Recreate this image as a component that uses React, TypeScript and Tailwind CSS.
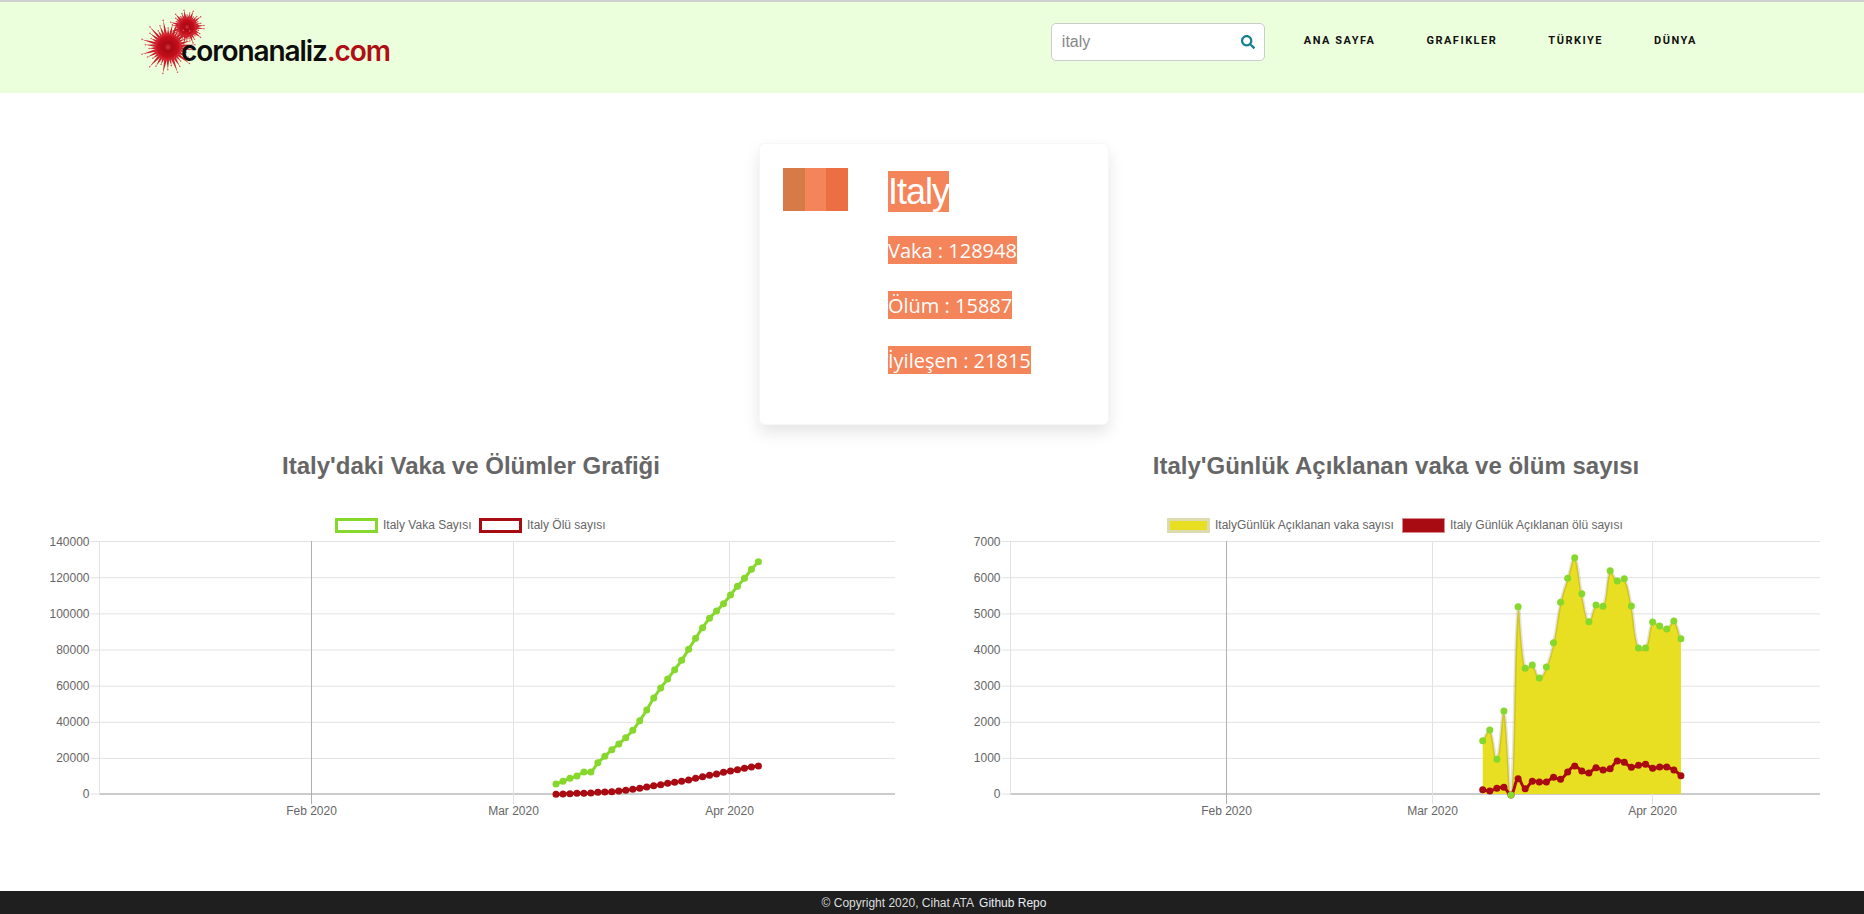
import { FaSearch } from "react-icons/fa";

type Point = [number, number];

const GRID_Y = [541.5, 577.7, 613.9, 650, 686.2, 722.3, 758.4, 794];
const TICKS = ["140000", "120000", "100000", "80000", "60000", "40000", "20000", "0"];
const DAILY_TICKS = ["7000", "6000", "5000", "4000", "3000", "2000", "1000", "0"];

// y values read off the chart, x is a fixed step per day
const totalCases = [822, 814, 805, 798, 786, 786, 758, 739, 719, 702, 683, 661, 632, 600, 564, 534, 507, 479, 451, 418, 385, 353, 325, 303, 281, 255, 229, 205, 178, 155];
const totalDeaths = [853, 852, 851, 850, 850, 849, 847, 846, 845, 843, 841, 838, 835, 831, 827, 824, 820, 817, 814, 810, 805, 800, 796, 792, 787, 783, 779, 775, 771, 768];
const dailyCases = [602, 570, 658, 513, 765, 200, 385, 375, 414, 381, 308, 187, 115, 53, 161, 245, 195, 199, 92, 123, 116, 198, 324, 324, 246, 258, 267, 243, 296];
const dailyDeaths = [749, 753, 745, 742, 765, 716, 746, 724, 726, 726, 712, 718, 696, 678, 693, 699, 683, 690, 686, 663, 667, 682, 676, 673, 685, 681, 681, 690, 707];

const toLeft = (values: number[]): Point[] =>
  values.map((v, i) => [556 + i * 6.98, 510 + v / 3]);
const toRight = (values: number[]): Point[] =>
  values.map((v, i) => [1482.7 + i * 7.08, 540 + v / 3]);

// same spline as chart.js, tension 0.4
const curve = (pts: Point[]) => {
  const ctrl = pts.map((p, i) => {
    const prev = pts[i - 1] ?? p;
    const next = pts[i + 1] ?? p;
    const d01 = Math.hypot(p[0] - prev[0], p[1] - prev[1]);
    const d12 = Math.hypot(next[0] - p[0], next[1] - p[1]);
    const sum = d01 + d12 || 1;
    const fa = (0.4 * d01) / sum;
    const fb = (0.4 * d12) / sum;
    return {
      before: [p[0] - fa * (next[0] - prev[0]), p[1] - fa * (next[1] - prev[1])],
      after: [p[0] + fb * (next[0] - prev[0]), p[1] + fb * (next[1] - prev[1])],
    };
  });
  let d = `M${pts[0][0]} ${pts[0][1]}`;
  for (let i = 1; i < pts.length; i++) {
    const a = ctrl[i - 1].after;
    const b = ctrl[i].before;
    d += ` C${a[0]} ${a[1]} ${b[0]} ${b[1]} ${pts[i][0]} ${pts[i][1]}`;
  }
  return d;
};

const Dots = ({ pts, color }: { pts: Point[]; color: string }) => (
  <>
    {pts.map((p, i) => (
      <circle key={i} cx={p[0]} cy={p[1]} r="3.5" fill={color} />
    ))}
  </>
);

const Axes = ({
  left,
  right,
  feb,
  mar,
  apr,
  ticks,
}: {
  left: number;
  right: number;
  feb: number;
  mar: number;
  apr: number;
  ticks: string[];
}) => (
  <>
    {GRID_Y.map((y) => (
      <line key={y} x1={left - 9} x2={right} y1={y} y2={y} stroke="#e2e2e2" />
    ))}
    <line x1={left} x2={right} y1={794} y2={794} stroke="#a6a6a6" />
    {ticks.map((t, i) => (
      <text
        key={t}
        x={left - 10}
        y={GRID_Y[i] + 4}
        textAnchor="end"
        fontSize="12"
        fill="#666"
      >
        {t}
      </text>
    ))}
    <line x1={left} x2={left} y1={541} y2={794} stroke="#e2e2e2" />
    <line x1={feb} x2={feb} y1={541} y2={804} stroke="#b0b0b0" />
    <line x1={mar} x2={mar} y1={541} y2={804} stroke="#e2e2e2" />
    <line x1={apr} x2={apr} y1={541} y2={804} stroke="#e2e2e2" />
    {[
      [feb, "Feb 2020"],
      [mar, "Mar 2020"],
      [apr, "Apr 2020"],
    ].map(([x, label]) => (
      <text key={label} x={x} y={815} textAnchor="middle" fontSize="12" fill="#666">
        {label}
      </text>
    ))}
  </>
);

const TotalChart = () => {
  const cases = toLeft(totalCases);
  const deaths = toLeft(totalDeaths);
  return (
    <svg viewBox="0 500 932 330" className="block w-full h-[330px]">
      <rect x="336.5" y="519.5" width="40" height="12" fill="#fff" stroke="#86d82c" strokeWidth="3" />
      <text x="383" y="529" fontSize="12" fill="#666">Italy Vaka Sayısı</text>
      <rect x="480.5" y="519.5" width="40" height="12" fill="#fff" stroke="#a90b12" strokeWidth="3" />
      <text x="527" y="529" fontSize="12" fill="#666">Italy Ölü sayısı</text>
      <Axes left={99.5} right={895} feb={311.5} mar={513.5} apr={729.5} ticks={TICKS} />
      <path d={curve(cases)} fill="none" stroke="#86d82c" strokeWidth="3" />
      <path d={curve(deaths)} fill="none" stroke="#a90b12" strokeWidth="3" />
      <Dots pts={cases} color="#86d82c" />
      <Dots pts={deaths} color="#a90b12" />
    </svg>
  );
};

const DailyChart = () => {
  const cases = toRight(dailyCases);
  const deaths = toRight(dailyDeaths);
  const line = curve(cases);
  const area = `${line} L${cases[cases.length - 1][0]} 794 L${cases[0][0]} 794 Z`;
  return (
    <svg viewBox="932 500 932 330" className="block w-full h-[330px]">
      <rect x="1168.5" y="519.5" width="40" height="12" fill="#e8de22" stroke="#dcdcb0" strokeWidth="3" />
      <text x="1215" y="529" fontSize="12" fill="#666">ItalyGünlük Açıklanan vaka sayısı</text>
      <rect x="1402.5" y="518.5" width="42" height="14" fill="#a90b12" stroke="#d98a8e" strokeWidth="1" />
      <text x="1450" y="529" fontSize="12" fill="#666">Italy Günlük Açıklanan ölü sayısı</text>
      <Axes left={1010.5} right={1820} feb={1226.5} mar={1432.5} apr={1652.5} ticks={DAILY_TICKS} />
      <path d={area} fill="#e8de22" />
      <path d={line} fill="none" stroke="rgba(0,0,0,0.1)" strokeWidth="3" />
      <path d={curve(deaths)} fill="none" stroke="#a90b12" strokeWidth="3" />
      <Dots pts={deaths} color="#a90b12" />
      <Dots pts={cases} color="#86d82c" />
    </svg>
  );
};

const Virus = ({ cx, cy, core, reach, id }: { cx: number; cy: number; core: number; reach: number; id: string }) => {
  const spikes = Array.from({ length: 34 }, (_, i) => {
    const a = (i / 34) * Math.PI * 2 + 0.1;
    const r = reach * (i % 3 === 0 ? 1 : i % 3 === 1 ? 0.7 : 0.84);
    return { a, r };
  });
  return (
    <g>
      <radialGradient id={id}>
        <stop offset="0" stopColor="#d8333d" />
        <stop offset="0.3" stopColor="#a80a14" />
        <stop offset="0.8" stopColor="#c40f1b" />
        <stop offset="1" stopColor="#d62a35" />
      </radialGradient>
      {spikes.map(({ a, r }, i) => {
        // tapered spike with a small bulb on its tip
        const nx = -Math.sin(a) * 1.6;
        const ny = Math.cos(a) * 1.6;
        const bx = cx + Math.cos(a) * core * 0.8;
        const by = cy + Math.sin(a) * core * 0.8;
        const tx = cx + Math.cos(a) * r;
        const ty = cy + Math.sin(a) * r;
        return (
          <g key={i}>
            <polygon
              points={`${bx + nx},${by + ny} ${tx},${ty} ${bx - nx},${by - ny}`}
              fill="#cb1f2b"
            />
            <circle cx={tx} cy={ty} r="0.8" fill="#d8545c" />
          </g>
        );
      })}
      <circle cx={cx} cy={cy} r={core} fill={`url(#${id})`} />
    </g>
  );
};

const Logo = () => (
  <svg viewBox="0 0 260 70" className="block w-[260px] h-[70px] mt-[3px] ml-[140px]">
    <Virus cx={47} cy={22} core={9} reach={17} id="virusSmall" />
    <Virus cx={28} cy={42} core={13} reach={27} id="virusBig" />
    <text
      x="41"
      y="56"
      fontSize="28"
      fontWeight="600"
      fill="#0d0d0d"
      letterSpacing="-1.1"
      className="font-['Inter',sans-serif]"
    >
      coronanaliz<tspan fill="#b00d14">.com</tspan>
    </text>
  </svg>
);

const NAV = ["ANA SAYFA", "GRAFIKLER", "TÜRKIYE", "DÜNYA"];

const Header = () => (
  <header className="flex items-start h-[93px] bg-[#ecffdc] border-t-2 border-[#cfcfcf]">
    <Logo />
    <div className="ml-auto mr-[167px] flex items-start">
      <div className="mt-[21px] flex items-center w-[214px] h-[38px] bg-white border border-[#ccc] rounded-[5px] pl-[10px] pr-[9px]">
        <span className="flex-1 text-[16px] text-[#888]">italy</span>
        <FaSearch className="w-[14px] h-[14px] text-[#17808f]" />
      </div>
      <nav className="ml-[39px] mt-[32px] flex gap-[51px] font-['Roboto',sans-serif] font-bold text-[11px] leading-[14px] tracking-[1.5px] text-[#111]">
        {NAV.map((item) => (
          <a key={item}>{item}</a>
        ))}
      </nav>
    </div>
  </header>
);

const STATS = ["Vaka : 128948", "Ölüm : 15887", "İyileşen : 21815"];

const CountryCard = () => (
  <div className="flex justify-center pl-1 pt-[50px]">
    <div className="flex w-[350px] h-[282px] bg-white rounded-[6px] border border-black/[0.03] shadow-[0_8px_16px_rgba(0,0,0,0.1)] pl-[23px] pt-[24px]">
      <div className="flex w-[65px] h-[43px]">
        <div className="flex-1 bg-[#d67b48]" />
        <div className="flex-1 bg-[#f48459]" />
        <div className="flex-1 bg-[#ec6f44]" />
      </div>
      <div className="ml-[40px] flex flex-col items-start pt-[3px]">
        <h1 className="bg-[#f48459] text-white text-[36px] tracking-[-1px] leading-[41px]">Italy</h1>
        <div className="mt-[24px] flex flex-col items-start gap-[27px]">
          {STATS.map((stat) => (
            <p
              key={stat}
              className="h-[28px] bg-[#f48459] text-white font-['Open_Sans',sans-serif] text-[20px] leading-[29px]"
            >
              {stat}
            </p>
          ))}
        </div>
      </div>
    </div>
  </div>
);

export default function App() {
  return (
    <div className="flex flex-col h-[914px] overflow-hidden bg-white font-['Liberation_Sans',sans-serif]">
      <Header />
      <CountryCard />
      <div className="grid grid-cols-2 pt-[27px]">
        <section>
          <h2 className="pl-[10px] text-center text-[24px] leading-[28px] font-bold text-[#666]">
            Italy'daki Vaka ve Ölümler Grafiği
          </h2>
          <div className="mt-[20px]">
            <TotalChart />
          </div>
        </section>
        <section>
          <h2 className="pr-1 text-center text-[24px] leading-[28px] font-bold text-[#666]">
            Italy'Günlük Açıklanan vaka ve ölüm sayısı
          </h2>
          <div className="mt-[20px]">
            <DailyChart />
          </div>
        </section>
      </div>
      <footer className="mt-auto flex justify-center items-center gap-[5px] h-[23px] pl-1 bg-[#1f1f1f] text-[12px] text-[#ddd]">
        <span>© Copyright 2020, Cihat ATA</span>
        <a className="text-[#e8eef5]">Github Repo</a>
      </footer>
    </div>
  );
}
